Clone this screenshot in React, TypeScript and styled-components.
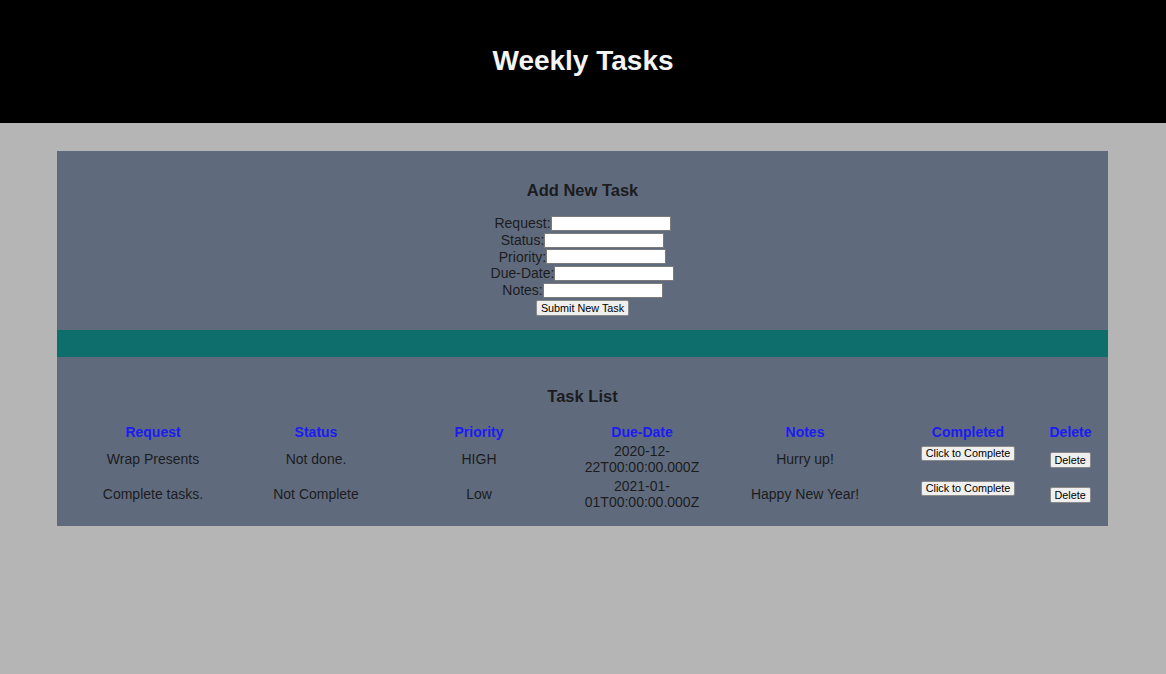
import styled, { createGlobalStyle } from "styled-components";

const GlobalStyle = createGlobalStyle`
  html, body {
    margin: 0;
    padding: 0;
    background-color: #b5b5b5;
    font-family: "Liberation Sans", Arial, sans-serif;
  }
`;

const Header = styled.header`
  height: 123px;
  background-color: #000;
  display: flex;
  align-items: center;
  justify-content: center;
`;

const Title = styled.h1`
  margin: 0 0 2px;
  color: #f4f4f4;
  font-size: 28px;
  line-height: 32px;
  font-weight: bold;
`;

const Main = styled.main`
  padding-top: 28px;
  padding-bottom: 40px;
`;

const Panel = styled.div`
  width: 1051px;
  margin: 0 58px 0 57px;
  background-color: #5f6b7d;
  color: #1c1c1e;
`;

const Section = styled.section<{ $top: number; $bottom: number }>`
  padding-top: ${(p) => p.$top}px;
  padding-bottom: ${(p) => p.$bottom}px;
  display: flex;
  flex-direction: column;
  align-items: center;
`;

const SectionTitle = styled.h3<{ $gap: number }>`
  margin: 0 0 ${(p) => p.$gap}px;
  font-size: 16.5px;
  line-height: 19px;
  font-weight: bold;
`;

const Band = styled.div`
  height: 27px;
  background-color: #0e6e6c;
`;

const Form = styled.form`
  display: flex;
  flex-direction: column;
  align-items: center;
`;

const Field = styled.label`
  display: flex;
  align-items: center;
  justify-content: center;
  height: 16.7px;
  font-size: 14px;
`;

const Input = styled.input`
  box-sizing: border-box;
  width: 120px;
  height: 15px;
  margin: 0;
  padding: 0 2px;
  border: 1px solid #7a7a7a;
  background: #fff;
`;

const Button = styled.button<{ $h?: number }>`
  box-sizing: border-box;
  height: ${(p) => p.$h ?? 16}px;
  margin: 0;
  padding: 0 4px;
  font-family: "Liberation Sans", Arial, sans-serif;
  font-size: 10.8px;
  color: #000;
  background-color: #efefef;
  border: 1px solid #8a8a8a;
  border-radius: 2px;
`;

const SubmitButton = styled(Button)`
  margin-top: 2px;
`;

const Table = styled.table`
  table-layout: fixed;
  width: 1019px;
  margin-right: 3px;
  border-collapse: separate;
  border-spacing: 0 3px;
  font-size: 14px;
`;

const Th = styled.th`
  padding: 0;
  line-height: 16px;
  color: #1b1bf2;
  font-weight: bold;
  text-align: center;
`;

const Td = styled.td<{ $top?: boolean }>`
  padding: ${(p) => (p.$top ? "1px 0 0" : "0")};
  height: 32px;
  box-sizing: border-box;
  line-height: 16px;
  text-align: center;
  vertical-align: ${(p) => (p.$top ? "top" : "middle")};
`;

const columns = ["Request", "Status", "Priority", "Due-Date", "Notes", "Completed", "Delete"];

const tasks = [
  { request: "Wrap Presents", status: "Not done.", priority: "HIGH", due: "2020-12-22T00:00:00.000Z", notes: "Hurry up!" },
  { request: "Complete tasks.", status: "Not Complete", priority: "Low", due: "2021-01-01T00:00:00.000Z", notes: "Happy New Year!" },
];

const fields = ["Request", "Status", "Priority", "Due-Date", "Notes"];

function App() {
  return (
    <>
      <GlobalStyle />
      <Header>
        <Title>Weekly Tasks</Title>
      </Header>
      <Main>
        <Panel>
          <Section $top={30} $bottom={14}>
            <SectionTitle $gap={15}>Add New Task</SectionTitle>
            <Form onSubmit={(e) => e.preventDefault()}>
              {fields.map((f) => (
                <Field key={f}>
                  {f}:<Input type="text" />
                </Field>
              ))}
              <SubmitButton type="submit">Submit New Task</SubmitButton>
            </Form>
          </Section>
          <Band />
          <Section $top={30} $bottom={13}>
            <SectionTitle $gap={15}>Task List</SectionTitle>
            <Table>
              <colgroup>
                {columns.map((c, i) => (
                  <col key={c} style={{ width: i === 6 ? 41 : 163 }} />
                ))}
              </colgroup>
              <thead>
                <tr>
                  {columns.map((c) => (
                    <Th key={c}>{c}</Th>
                  ))}
                </tr>
              </thead>
              <tbody>
                {tasks.map((t) => (
                  <tr key={t.request}>
                    <Td>{t.request}</Td>
                    <Td>{t.status}</Td>
                    <Td>{t.priority}</Td>
                    <Td>{t.due}</Td>
                    <Td>{t.notes}</Td>
                    <Td $top>
                      <Button $h={15}>Click to Complete</Button>
                    </Td>
                    <Td>
                      <Button>Delete</Button>
                    </Td>
                  </tr>
                ))}
              </tbody>
            </Table>
          </Section>
        </Panel>
      </Main>
    </>
  );
}

export default App;
